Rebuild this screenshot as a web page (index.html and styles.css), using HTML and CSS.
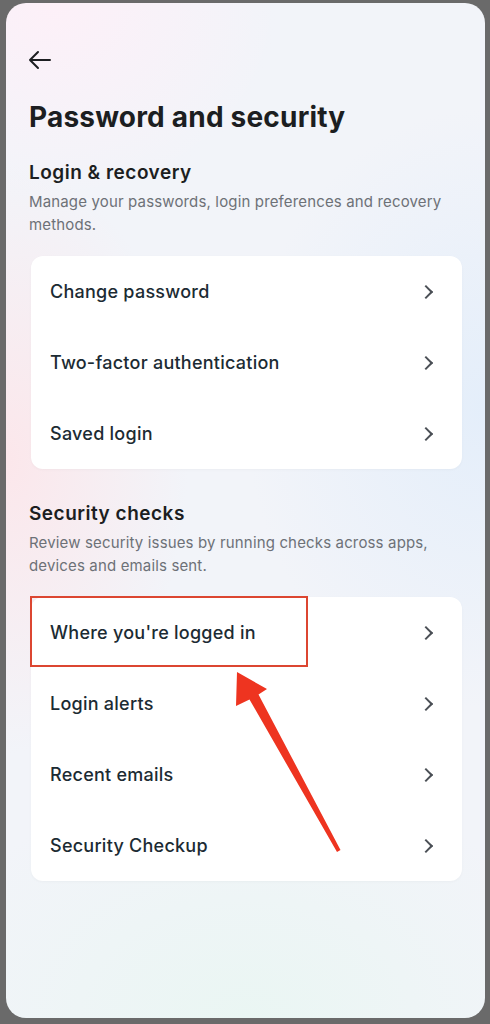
FILE: index.html
```html
<!DOCTYPE html>
<html lang="en">
<head>
<meta charset="UTF-8">
<meta name="viewport" content="width=device-width, initial-scale=1.0">
<title>Password and security</title>
<link rel="stylesheet" href="styles.css">
</head>
<body>
    <div class="screen">
        <button class="back" aria-label="Back">
            <svg width="24" height="24" viewBox="0 0 24 24" fill="none" stroke="#1c1e21" stroke-width="2" stroke-linecap="round" stroke-linejoin="round">
                <path d="M22 12H2M10 4l-8 8 8 8"/>
            </svg>
        </button>

        <h1 class="title">Password and security</h1>

        <h2 class="section-title">Login &amp; recovery</h2>
        <p class="section-desc">Manage your passwords, login preferences and recovery methods.</p>

        <div class="card">
            <div class="row"><span>Change password</span><span class="chev"></span></div>
            <div class="row"><span>Two-factor authentication</span><span class="chev"></span></div>
            <div class="row"><span>Saved login</span><span class="chev"></span></div>
        </div>

        <h2 class="section-title second">Security checks</h2>
        <p class="section-desc">Review security issues by running checks across apps, devices and emails sent.</p>

        <div class="card marked">
            <div class="row"><span>Where you're logged in</span><span class="chev"></span></div>
            <div class="row"><span>Login alerts</span><span class="chev"></span></div>
            <div class="row"><span>Recent emails</span><span class="chev"></span></div>
            <div class="row"><span>Security Checkup</span><span class="chev"></span></div>

            <!-- annotation drawn over the list -->
            <div class="highlight"></div>
            <svg class="pointer" width="431" height="284" viewBox="0 0 431 284">
                <polygon fill="#ee3420" points="206,75 236,92 227.5,97.5 309.5,253 306,255 218.5,102.5 205,109"/>
            </svg>
        </div>
    </div>
</body>
</html>
```

FILE: styles.css
```css
body {
    margin: 0;
    background-color: #6a6a6a;
    font-family: Inter, "Noto Sans", sans-serif;
    color: #1c2b33;
}
.screen {
    height: 1015px;
    margin: 3px 5px 0 6px;
    padding: 0 23px;
    box-sizing: border-box;
    border-radius: 20px;
    overflow: hidden;
    background:
        radial-gradient(ellipse 260px 420px at 0% 45%, rgba(252, 230, 234, 0.95), rgba(252, 230, 234, 0) 70%),
        radial-gradient(ellipse 300px 260px at 10% 0%, rgba(253, 240, 248, 1), rgba(253, 240, 248, 0) 75%),
        radial-gradient(ellipse 320px 400px at 100% 40%, rgba(228, 238, 250, 1), rgba(228, 238, 250, 0) 75%),
        radial-gradient(ellipse 420px 300px at 50% 100%, rgba(234, 246, 243, 1), rgba(234, 246, 243, 0) 80%),
        #f2f4f9;
}
.back {
    display: block;
    width: 24px;
    height: 24px;
    margin: 45px 0 0 -1px;
    padding: 0;
    border: none;
    background: none;
}
.title {
    margin: 27px 0 0;
    font-size: 28px;
    line-height: 36px;
    font-weight: 700;
    color: #1c1e21;
    letter-spacing: 0.2px;
}
.section-title {
    margin: 25px 0 0;
    font-size: 19px;
    line-height: 26px;
    font-weight: 600;
    color: #1c1e21;
    letter-spacing: 0.5px;
}
.section-title.second {
    margin-top: 32px;
}
.section-desc {
    margin: 4px 0 0;
    font-size: 15px;
    line-height: 23px;
    color: #6d7177;
    letter-spacing: 0.15px;
}
.card {
    position: relative;
    margin: 20px 0 0 2px;
    background-color: #ffffff;
    border-radius: 12px;
    box-shadow: 0 1px 3px rgba(0, 0, 0, 0.03);
}
.card.marked {
    margin-top: 20px;
}
.row {
    display: flex;
    align-items: center;
    justify-content: space-between;
    height: 71px;
    padding: 0 28px 0 19px;
    font-size: 18px;
    font-weight: 500;
    color: #1c2b33;
    letter-spacing: 0.25px;
}
.chev {
    width: 8px;
    height: 8px;
    margin-right: 3px;
    border-top: 2px solid #4a4f55;
    border-right: 2px solid #4a4f55;
    transform: rotate(45deg);
}
.highlight {
    position: absolute;
    left: -1px;
    top: -1px;
    width: 278px;
    height: 71px;
    box-sizing: border-box;
    border: 2.5px solid #dc4631;
}
.pointer {
    position: absolute;
    left: 0;
    top: 0;
    overflow: visible;
    pointer-events: none;
}
```
